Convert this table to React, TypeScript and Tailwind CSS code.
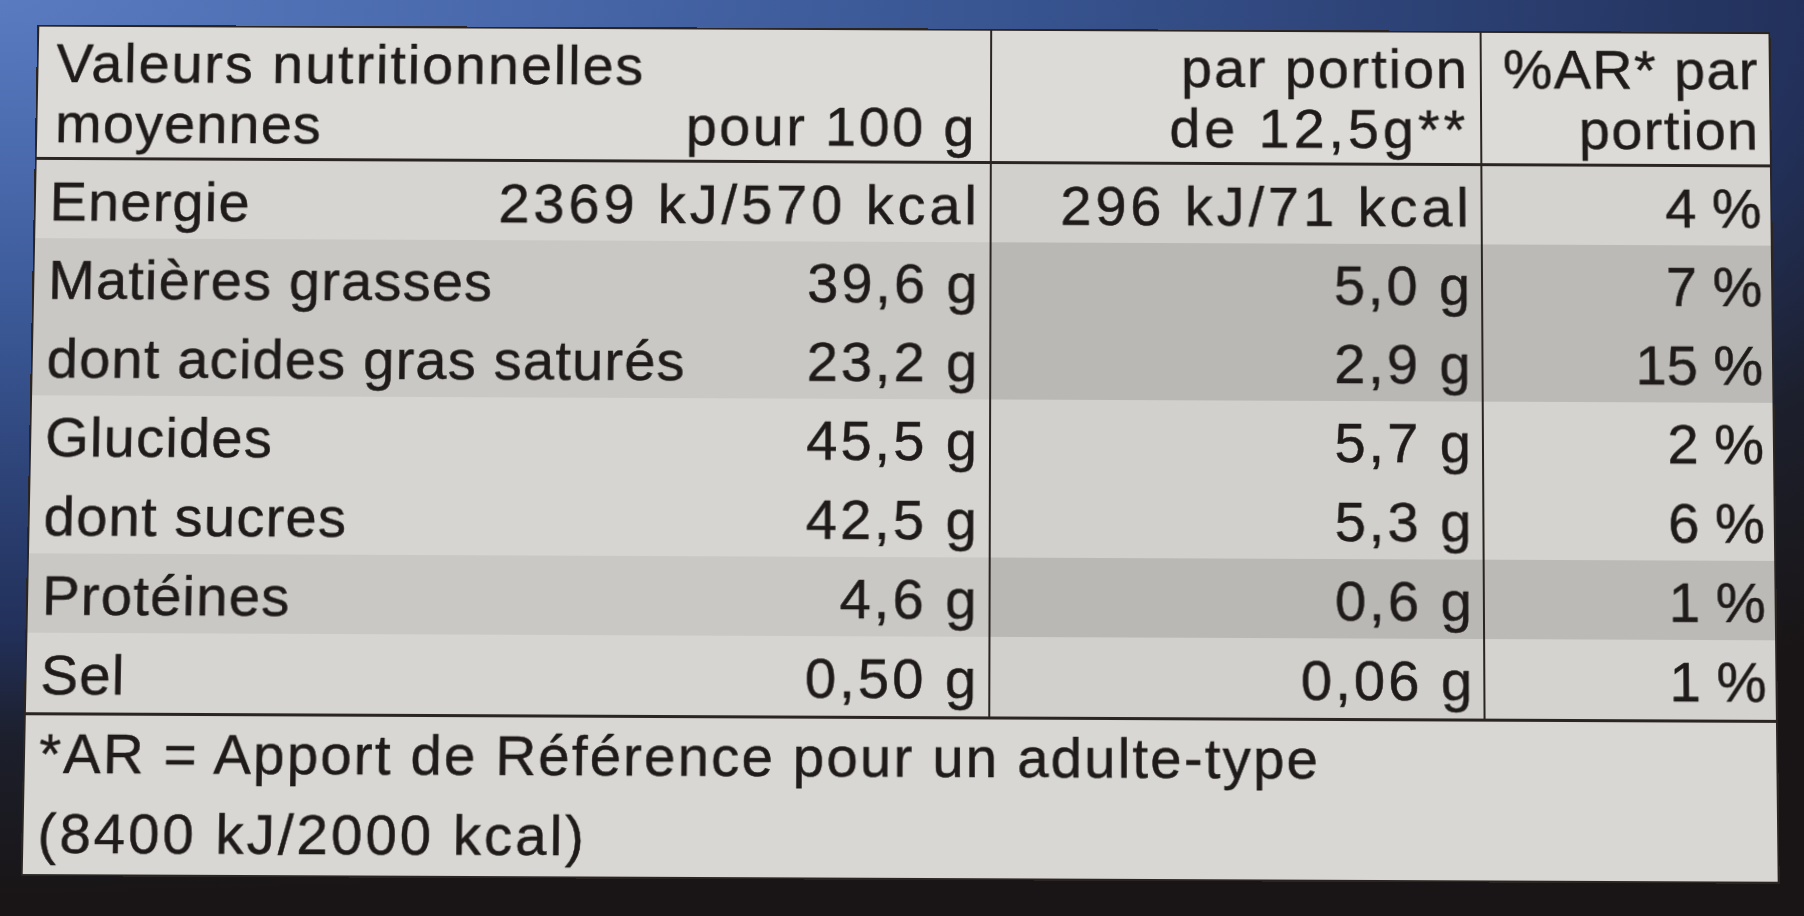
import React from "react";

type Row = {
  label: string;
  a: string;
  b: string;
  c: string;
  dark: boolean;
};

const rows: Row[] = [
  { label: "Energie", a: "2369 kJ/570 kcal", b: "296 kJ/71 kcal", c: "4 %", dark: false },
  { label: "Matières grasses", a: "39,6 g", b: "5,0 g", c: "7 %", dark: true },
  { label: "dont acides gras saturés", a: "23,2 g", b: "2,9 g", c: "15 %", dark: true },
  { label: "Glucides", a: "45,5 g", b: "5,7 g", c: "2 %", dark: false },
  { label: "dont sucres", a: "42,5 g", b: "5,3 g", c: "6 %", dark: false },
  { label: "Protéines", a: "4,6 g", b: "0,6 g", c: "1 %", dark: true },
  { label: "Sel", a: "0,50 g", b: "0,06 g", c: "1 %", dark: false },
];

function BodyRow({ row }: { row: Row }) {
  const kj = row.a.includes("kJ");
  return (
    <div className="grid grid-cols-[960px_493px_1fr] h-[79px] leading-[83px] whitespace-nowrap">
      <div
        className={
          row.dark
            ? "flex justify-between pl-[14px] pr-[9px] border-r-2 border-[#2a2522] bg-[#c9c8c4]"
            : "flex justify-between pl-[14px] pr-[9px] border-r-2 border-[#2a2522] bg-[#d6d5d1]"
        }
      >
        <span className="tracking-[1.25px]">{row.label}</span>
        <span className={kj ? "tracking-[4px]" : "tracking-[3px]"}>{row.a}</span>
      </div>
      <div
        className={
          row.dark
            ? "text-right pr-[8px] border-r-2 border-[#2a2522] bg-[#b9b8b5]"
            : "text-right pr-[8px] border-r-2 border-[#2a2522] bg-[#d1d0cc]"
        }
      >
        <span className={kj ? "tracking-[4px]" : "tracking-[3px]"}>{row.b}</span>
      </div>
      <div
        className={
          row.dark
            ? "text-right pr-[9px] bg-[#bbbab7]"
            : "text-right pr-[9px] bg-[#d4d3cf]"
        }
      >
        {row.c}
      </div>
    </div>
  );
}

export default function App() {
  return (
    <div className="w-[1804px] h-[916px] overflow-hidden pt-[25px] pl-[29px] bg-[#191516] bg-[radial-gradient(ellipse_2600px_900px_at_0%_0%,#5a7bc0_0%,#4868ab_20%,#37538f_40%,#2c4174_55%,#22305a_70%,#1c1f2c_82%,#191516_100%)] font-['Liberation_Sans',Arial,sans-serif] text-[56px] text-[#1f1b1a] [-webkit-text-stroke:0.5px_#1f1b1a]">
      <div className="w-[1746px] h-[852px] flex flex-col border-2 border-[#2a2522] bg-[#d7d6d2] [transform:perspective(2000px)_rotateX(2deg)_rotate(0.25deg)]">
        <div className="grid grid-cols-[960px_493px_1fr] h-[135px] border-b-[3px] border-[#2a2522] bg-[#dcdbd7] leading-[61px] whitespace-nowrap">
          <div className="pt-[6px] pl-[18px] pr-[13px] border-r-2 border-[#2a2522]">
            <div className="tracking-[2px]">Valeurs nutritionnelles</div>
            <div className="flex justify-between">
              <span className="tracking-[1.25px]">moyennes</span>
              <span className="tracking-[2.5px]">pour 100 g</span>
            </div>
          </div>
          <div className="pt-[6px] pr-[11px] text-right border-r-2 border-[#2a2522]">
            <div className="tracking-[2px]">par portion</div>
            <div className="tracking-[4px]">de 12,5g**</div>
          </div>
          <div className="pt-[6px] pr-[10px] text-right tracking-[1.5px]">
            <div>%AR* par</div>
            <div>portion</div>
          </div>
        </div>
        {rows.map((r) => (
          <BodyRow key={r.label} row={r} />
        ))}
        <div className="flex-1 border-t-[3px] border-[#2a2522] bg-[#d8d7d3] pl-[14px] leading-[79px] whitespace-nowrap">
          <div className="-mt-[2px]">
            <div className="tracking-[2.2px]">*AR = Apport de Référence pour un adulte-type</div>
            <div className="tracking-[3px]">(8400 kJ/2000 kcal)</div>
          </div>
        </div>
      </div>
    </div>
  );
}
